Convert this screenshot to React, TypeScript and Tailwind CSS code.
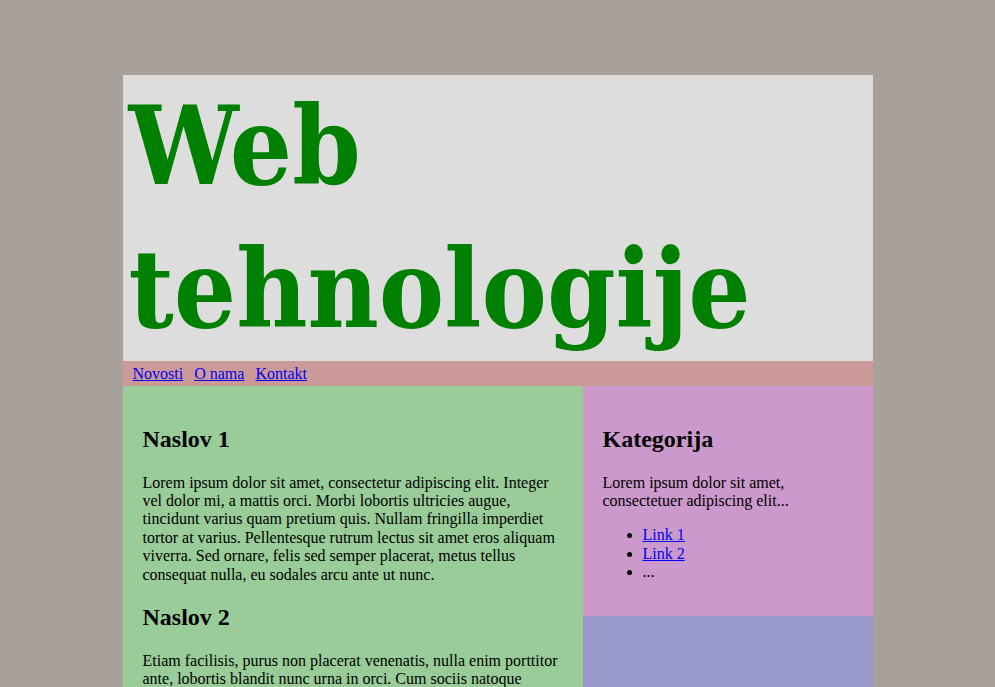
export default function App() {
  const serif = { fontFamily: '"Liberation Serif", "Times New Roman", serif' };
  return (
    <div className="min-h-[687px] bg-[#a7a09b] pt-[75px]" style={serif}>
      <div className="mx-auto w-[750px] bg-[#9999cc] text-black text-[16px] leading-[18.4px]">
        <header className="bg-[#dddddd] h-[286px] pl-[6px] overflow-visible">
          <h1
            className="m-0 text-[#008000] font-bold text-[109px] leading-[143px] font-stretch-condensed"
            style={{ fontFamily: '"DejaVu Serif Condensed", "DejaVu Serif", serif' }}
          >
            Web tehnologije
          </h1>
        </header>
        <nav className="bg-[#cc9999] h-[25px] px-[10px] pt-[1px] flex items-center gap-[11px]">
          <a href="#" className="text-[#0000ee] underline">Novosti</a>
          <a href="#" className="text-[#0000ee] underline">O nama</a>
          <a href="#" className="text-[#0000ee] underline">Kontakt</a>
        </nav>
        <div className="flex items-start">
          <main className="w-[460px] bg-[#99cc99] px-[20px] py-[20px] h-[301px] overflow-hidden">
            <h2 className="text-[24px] leading-[27.6px] font-bold mt-[20px] mb-[20px]">Naslov 1</h2>
            <p>
              Lorem ipsum dolor sit amet, consectetur adipiscing elit. Integer vel dolor mi, a mattis orci. Morbi lobortis ultricies augue, tincidunt varius quam pretium quis. Nullam fringilla imperdiet tortor at varius. Pellentesque rutrum lectus sit amet eros aliquam viverra. Sed ornare, felis sed semper placerat, metus tellus consequat nulla, eu sodales arcu ante ut nunc.
            </p>
            <h2 className="text-[24px] leading-[27.6px] font-bold mt-[20px] mb-[20px]">Naslov 2</h2>
            <p>
              Etiam facilisis, purus non placerat venenatis, nulla enim porttitor ante, lobortis blandit nunc urna in orci. Cum sociis natoque penatibus et magnis dis parturient montes, nascetur ridiculus mus.
            </p>
          </main>
          <aside className="w-[290px] bg-[#cc99cc] px-[20px] pt-[20px] pb-[18px]">
            <h2 className="text-[24px] leading-[27.6px] font-bold mt-[20px] mb-[20px]">Kategorija</h2>
            <p className="mb-[16px]">Lorem ipsum dolor sit amet, consectetuer adipiscing elit...</p>
            <ul className="list-disc pl-[40px] mb-[16px]">
              <li><a href="#" className="text-[#0000ee] underline">Link 1</a></li>
              <li><a href="#" className="text-[#0000ee] underline">Link 2</a></li>
              <li>...</li>
            </ul>
          </aside>
        </div>
      </div>
    </div>
  );
}
